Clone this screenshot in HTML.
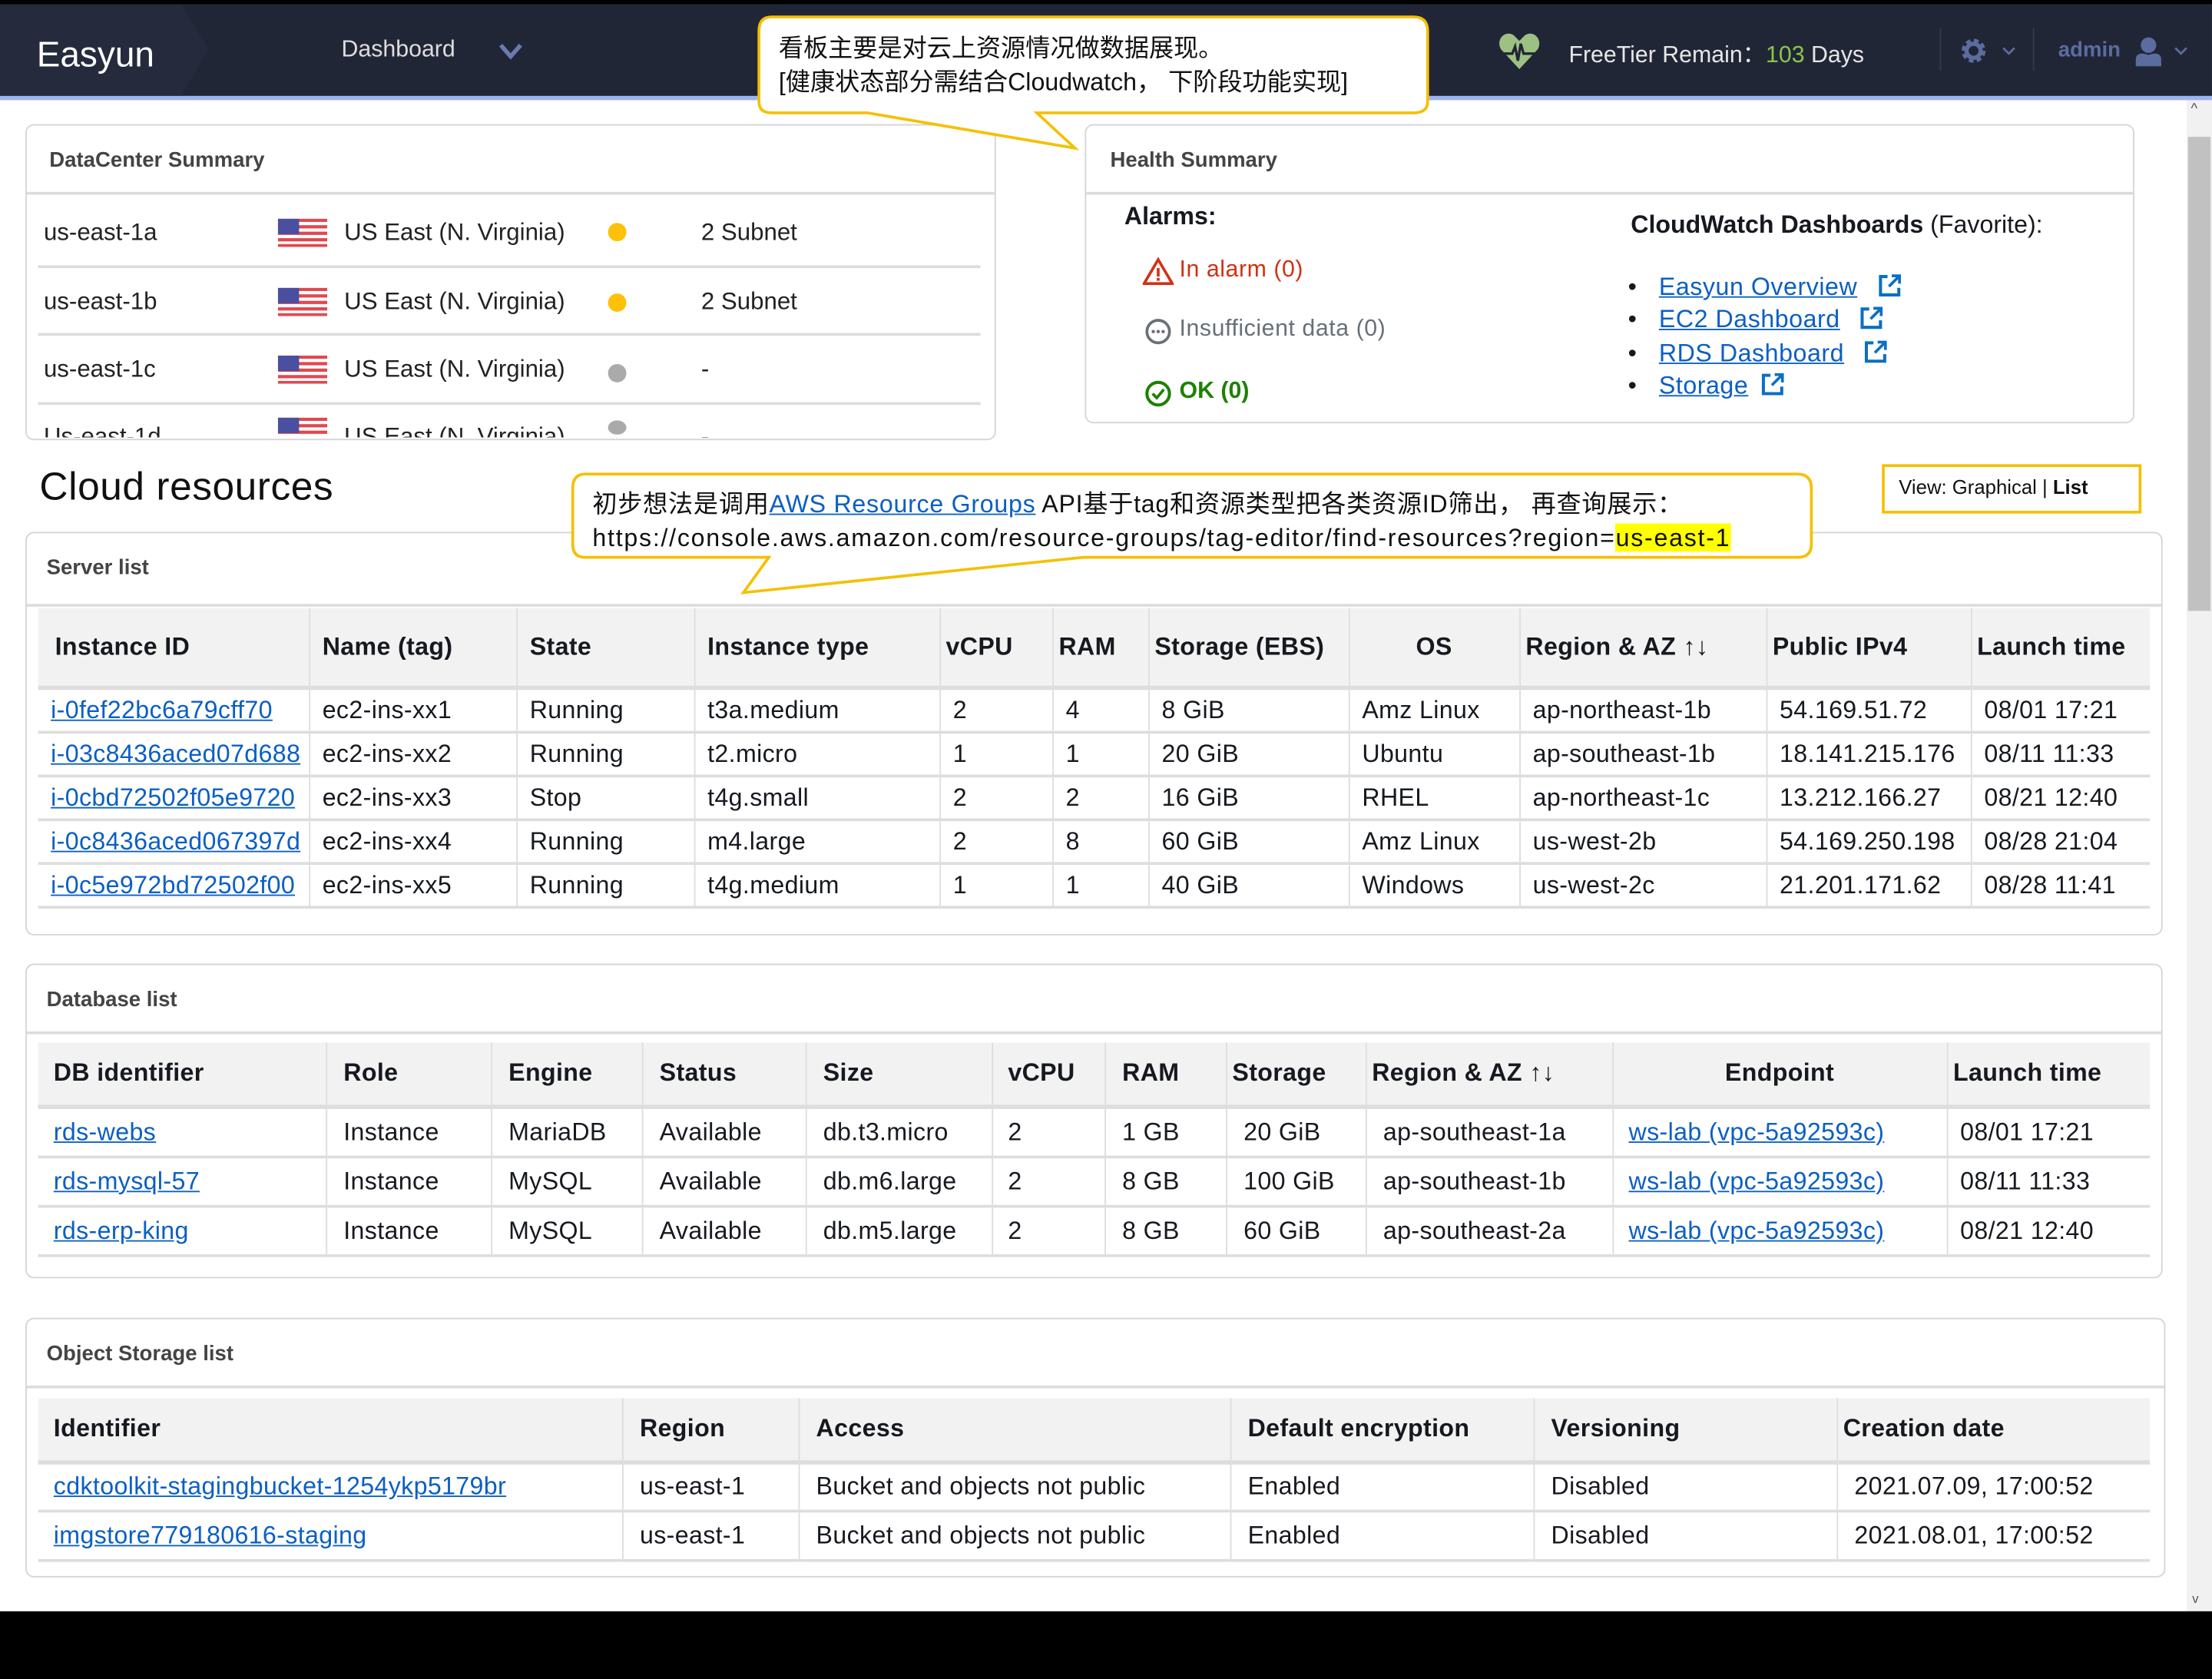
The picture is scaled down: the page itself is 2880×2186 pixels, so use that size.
<!DOCTYPE html>
<html><head><meta charset="utf-8">
<style>
html,body{margin:0;padding:0;width:2880px;height:2186px;overflow:hidden;background:#fff}
#w{position:absolute;left:0;top:0;width:1568px;height:1190px;transform:scale(1.83673,1.83697);transform-origin:0 0;font-family:"Liberation Sans","Noto Sans CJK SC",sans-serif;color:#16191f;overflow:hidden}
.a{position:absolute;white-space:nowrap}
.card{position:absolute;border:1.5px solid #d5d5d5;border-radius:6px;background:#fff}
.card .h{position:absolute;left:14px;top:14px;font-size:15px;font-weight:bold;color:#444}
.card .sep{position:absolute;left:0;right:0;height:2px;background:#dcdcdc}
table{position:absolute;border-collapse:collapse;table-layout:fixed;font-size:17.5px;letter-spacing:0.2px}
td,th{border-left:1px solid #ddd;padding:0 0 0 9px;white-space:nowrap;overflow:hidden;text-align:left}
td:first-child,th:first-child{border-left:none}
th{background:#f2f2f2;font-weight:bold;border-bottom:3px solid #ddd}
td{border-bottom:2px solid #ddd}
a{color:#0b5fc4;text-decoration:underline}
.dc{font-size:17px;color:#222}
.dot{position:absolute;width:13px;height:13px;border-radius:50%}
.hl{stroke:#f5c000;stroke-width:2;fill:#fff}
.ext{display:inline-block;vertical-align:-2px;margin-left:14px}
</style></head><body><div id="w">
<svg width="0" height="0" style="position:absolute"><defs>
<g id="fl"><rect width="35" height="20" fill="#fff"/><rect y="0" width="35" height="2.3" fill="#e0484e"/><rect y="4.6" width="35" height="2.3" fill="#e0484e"/><rect y="9.2" width="35" height="2.3" fill="#e0484e"/><rect y="13.8" width="35" height="2.3" fill="#e0484e"/><rect y="18" width="35" height="2" fill="#e0484e"/><rect width="15" height="11" fill="#4a4fa0"/></g>
<g id="ex"><path d="M7 2 H2 V15 H15 V10" fill="none" stroke="#0b6fc4" stroke-width="2.2"/><path d="M10 1.5 H15.5 V7" fill="none" stroke="#0b6fc4" stroke-width="2"/><path d="M15 2 L8 9" stroke="#0b6fc4" stroke-width="2"/></g>
</defs></svg>
<!-- header -->
<div class="a" style="left:0;top:0;width:1568px;height:3px;background:#000"></div>
<div class="a" style="left:0;top:3px;width:1568px;height:65px;background:#212637"></div>
<svg class="a" style="left:0;top:3px" width="150" height="65"><polygon points="0,0 128,0 148,32 128,65 0,65" fill="#252b3d"/></svg>
<div class="a" style="left:0;top:68px;width:1568px;height:3px;background:#9bb4ee"></div>
<div class="a" style="left:26px;top:25px;font-size:25px;color:#fff">Easyun</div>
<div class="a" style="left:242px;top:26px;font-size:16.5px;color:#ddd">Dashboard</div>
<svg class="a" style="left:353px;top:29px" width="18" height="14"><path d="M2 3 L9 11 L16 3" stroke="#6a7bb0" stroke-width="3" fill="none"/></svg>
<svg class="a" style="left:1062px;top:22px" width="30" height="28"><path d="M15 27 L2 13 C-2 6 5 -1 11 3 L15 7 L19 3 C25 -1 32 6 28 13 Z" fill="#9dc183"/><path d="M2 16 H10 L12 11 L14 21 L16 9 L18 16 H28" stroke="#212637" stroke-width="1.8" fill="none"/></svg>
<div class="a" style="left:1112px;top:25px;font-size:16.5px;color:#e6e6e6">FreeTier Remain：<span style="color:#8bc34a">103</span> Days</div>
<div class="a" style="left:1375px;top:20px;width:1px;height:30px;background:#333a4d"></div>
<div class="a" style="left:1441px;top:20px;width:1px;height:30px;background:#333a4d"></div>
<svg class="a" style="left:1389px;top:26px" width="20" height="20" viewBox="0 0 20 20"><circle cx="10" cy="10" r="6.5" fill="none" stroke="#5b6c9e" stroke-width="4" stroke-dasharray="3 2.1"/><circle cx="10" cy="10" r="5" fill="none" stroke="#5b6c9e" stroke-width="3"/></svg>
<svg class="a" style="left:1419px;top:32px" width="10" height="8"><path d="M1 2 L5 6 L9 2" stroke="#5b6c9e" stroke-width="1.5" fill="none"/></svg>
<div class="a" style="left:1459px;top:27px;font-size:15px;color:#5b6c9e;font-weight:bold">admin</div>
<svg class="a" style="left:1512px;top:25px" width="22" height="22"><circle cx="11" cy="7" r="5.5" fill="#5b6c9e"/><path d="M2 22 V17 C2 13 6 12 11 14 C16 12 20 13 20 17 V22 Z" fill="#5b6c9e"/></svg>
<svg class="a" style="left:1541px;top:32px" width="10" height="8"><path d="M1 2 L5 6 L9 2" stroke="#5b6c9e" stroke-width="1.5" fill="none"/></svg>
<!-- scrollbar -->
<div class="a" style="left:1550px;top:71px;width:18px;height:1071px;background:#f1f1f1"></div>
<div class="a" style="left:1551px;top:97px;width:16px;height:336px;background:#c1c1c1"></div>
<div class="a" style="left:1553px;top:72px;font-size:10px;color:#555">^</div>
<div class="a" style="left:1554px;top:1128px;font-size:9px;color:#555">v</div>
<div class="a" style="left:0;top:1142px;width:1568px;height:48px;background:#000"></div>

<!-- DataCenter -->
<div class="card" style="left:18px;top:88px;width:686px;height:222px;overflow:hidden">
<div class="h" style="left:16px;top:16px">DataCenter Summary</div>
<div class="sep" style="top:47px"></div>
<div class="sep" style="top:99px;left:8px;right:10px"></div>
<div class="sep" style="top:147px;left:8px;right:10px"></div>
<div class="sep" style="top:196px;left:8px;right:10px"></div>
</div>
<div class="a dc" style="left:31px;top:155px">us-east-1a</div>
<div class="a dc" style="left:31px;top:204px">us-east-1b</div>
<div class="a dc" style="left:31px;top:252px">us-east-1c</div>
<div class="a" style="left:0;top:296px;width:706px;height:14px;overflow:hidden"><div class="a dc" style="left:31px;top:4px">Us-east-1d</div><div class="a dc" style="left:244px;top:4px">US East (N. Virginia)</div><div class="a dc" style="left:497px;top:4px">-</div></div>
<div class="a dc" style="left:244px;top:155px">US East (N. Virginia)</div>
<div class="a dc" style="left:244px;top:204px">US East (N. Virginia)</div>
<div class="a dc" style="left:244px;top:252px">US East (N. Virginia)</div>
<div class="a dc" style="left:497px;top:155px">2 Subnet</div>
<div class="a dc" style="left:497px;top:204px">2 Subnet</div>
<div class="a dc" style="left:497px;top:252px">-</div>
<div class="dot" style="left:431px;top:158px;background:#ffc107"></div>
<div class="dot" style="left:431px;top:208px;background:#ffc107"></div>
<div class="dot" style="left:431px;top:258px;background:#aaa"></div>
<div class="dot" style="left:431px;top:298px;background:#aaa;height:10px"></div>
<svg class="a" style="left:197px;top:155px" width="35" height="20"><use href="#fl"/></svg>
<svg class="a" style="left:197px;top:204px" width="35" height="20"><use href="#fl"/></svg>
<svg class="a" style="left:197px;top:252px" width="35" height="20"><use href="#fl"/></svg>
<svg class="a" style="left:197px;top:296px" width="35" height="13"><use href="#fl"/></svg>

<!-- Health -->
<div class="card" style="left:769px;top:88px;width:742px;height:210px">
<div class="h" style="left:17px;top:16px">Health Summary</div>
<div class="sep" style="top:47px"></div>
</div>
<div class="a" style="left:797px;top:143px;font-size:17.5px;font-weight:bold">Alarms:</div>
<svg class="a" style="left:810px;top:182px" width="22" height="20"><path d="M11 2 L21 19 H1 Z" fill="none" stroke="#d13212" stroke-width="2"/><rect x="10" y="8" width="2" height="6" fill="#d13212"/><rect x="10" y="15" width="2" height="2" fill="#d13212"/></svg>
<div class="a" style="left:836px;top:182px;font-size:16.5px;color:#d13212;letter-spacing:0.3px">In alarm (0)</div>
<svg class="a" style="left:811px;top:225px" width="20" height="20"><circle cx="10" cy="10" r="8" fill="none" stroke="#687078" stroke-width="2"/><circle cx="6.5" cy="10" r="1.2" fill="#687078"/><circle cx="10" cy="10" r="1.2" fill="#687078"/><circle cx="13.5" cy="10" r="1.2" fill="#687078"/></svg>
<div class="a" style="left:836px;top:224px;font-size:16.5px;color:#687078;letter-spacing:0.3px">Insufficient data (0)</div>
<svg class="a" style="left:811px;top:269px" width="20" height="20"><circle cx="10" cy="10" r="8" fill="none" stroke="#1d8102" stroke-width="2.2"/><path d="M6 10 L9 13 L14 7" stroke="#1d8102" stroke-width="2" fill="none"/></svg>
<div class="a" style="left:836px;top:268px;font-size:16.5px;color:#1d8102;font-weight:bold">OK (0)</div>
<div class="a" style="left:1156px;top:149px;font-size:17.5px"><b>CloudWatch Dashboards</b> (Favorite):</div>
<div class="a" style="left:1154px;top:192px;font-size:17.5px;line-height:23.4px;letter-spacing:0.3px">
<div>•&nbsp;&nbsp; <a>Easyun Overview</a><svg class="ext" width="17" height="17"><use href="#ex"/></svg></div>
<div>•&nbsp;&nbsp; <a>EC2 Dashboard</a><svg class="ext" width="17" height="17"><use href="#ex"/></svg></div>
<div>•&nbsp;&nbsp; <a>RDS Dashboard</a><svg class="ext" width="17" height="17"><use href="#ex"/></svg></div>
<div>•&nbsp;&nbsp; <a>Storage</a><svg class="ext" width="17" height="17" style="margin-left:9px"><use href="#ex"/></svg></div>
</div>

<!-- callout 1 -->
<svg class="a" style="left:530px;top:8px" width="500" height="102"><path class="hl" d="M17 4 H472 Q482 4 482 14 V64 Q482 72 472 72 H205 L232 97 L85 72 H17 Q8 72 8 64 V14 Q8 4 17 4 Z"/></svg>
<div class="a" style="left:552px;top:22px;font-size:17.5px;line-height:24px;color:#111">看板主要是对云上资源情况做数据展现。<br>[健康状态部分需结合Cloudwatch，&nbsp;下阶段功能实现]</div>

<div class="a" style="left:28px;top:329px;font-size:28px;color:#111;letter-spacing:0.3px">Cloud resources</div>

<!-- Server list -->
<div class="card" style="left:18px;top:377px;width:1513px;height:284px">
<div class="h" style="top:16px">Server list</div>
<div class="sep" style="top:50px"></div>
</div>
<table style="left:27px;top:431px;width:1497px">
<colgroup><col style="width:192px"><col style="width:147px"><col style="width:126px"><col style="width:174px"><col style="width:80px"><col style="width:68px"><col style="width:142px"><col style="width:121px"><col style="width:175px"><col style="width:145px"><col style="width:127px"></colgroup>
<tr style="height:56px"><th style="padding-left:12px">Instance ID</th><th>Name (tag)</th><th>State</th><th>Instance type</th><th style="padding-left:4px">vCPU</th><th style="padding-left:4px">RAM</th><th style="padding-left:4px">Storage (EBS)</th><th style="text-align:center;padding:0">OS</th><th style="padding-left:4px">Region &amp; AZ ↑↓</th><th style="padding-left:4px">Public IPv4</th><th style="padding-left:4px">Launch time</th></tr>
<tr style="height:32px"><td><a>i-0fef22bc6a79cff70</a></td><td>ec2-ins-xx1</td><td>Running</td><td>t3a.medium</td><td>2</td><td>4</td><td>8 GiB</td><td>Amz Linux</td><td>ap-northeast-1b</td><td>54.169.51.72</td><td>08/01 17:21</td></tr>
<tr style="height:31px"><td><a>i-03c8436aced07d688</a></td><td>ec2-ins-xx2</td><td>Running</td><td>t2.micro</td><td>1</td><td>1</td><td>20 GiB</td><td>Ubuntu</td><td>ap-southeast-1b</td><td>18.141.215.176</td><td>08/11 11:33</td></tr>
<tr style="height:31px"><td><a>i-0cbd72502f05e9720</a></td><td>ec2-ins-xx3</td><td>Stop</td><td>t4g.small</td><td>2</td><td>2</td><td>16 GiB</td><td>RHEL</td><td>ap-northeast-1c</td><td>13.212.166.27</td><td>08/21 12:40</td></tr>
<tr style="height:31px"><td><a>i-0c8436aced067397d</a></td><td>ec2-ins-xx4</td><td>Running</td><td>m4.large</td><td>2</td><td>8</td><td>60 GiB</td><td>Amz Linux</td><td>us-west-2b</td><td>54.169.250.198</td><td>08/28 21:04</td></tr>
<tr style="height:31px"><td><a>i-0c5e972bd72502f00</a></td><td>ec2-ins-xx5</td><td>Running</td><td>t4g.medium</td><td>1</td><td>1</td><td>40 GiB</td><td>Windows</td><td>us-west-2c</td><td>21.201.171.62</td><td>08/28 11:41</td></tr>
</table>

<!-- callout 2 -->
<svg class="a" style="left:398px;top:330px" width="895" height="95"><path class="hl" d="M17 6 H876 Q886 6 886 16 V56 Q886 65 876 65 H370 L129 90 L147 65 H17 Q8 65 8 56 V16 Q8 6 17 6 Z"/></svg>
<div class="a" style="left:420px;top:345px;font-size:17.5px;line-height:24px;color:#111"><span style="letter-spacing:0.4px">初步想法是调用<a>AWS Resource Groups</a> API基于tag和资源类型把各类资源ID筛出，&nbsp;再查询展示：</span><br><span style="letter-spacing:0.95px">https://console.aws.amazon.com/resource-groups/tag-editor/find-resources?region=<span style="background:#ffff00">us-east-1</span></span></div>
<div class="a" style="left:1334px;top:329px;width:180px;height:31px;border:2px solid #f5c000;background:#fff"></div>
<div class="a" style="left:1346px;top:337px;font-size:14px;color:#111">View: Graphical | <b>List</b></div>

<!-- Database -->
<div class="card" style="left:18px;top:683px;width:1513px;height:221px">
<div class="h" style="top:16px">Database list</div>
<div class="sep" style="top:47px"></div>
</div>
<table style="left:27px;top:739px;width:1497px">
<colgroup><col style="width:204px"><col style="width:117px"><col style="width:107px"><col style="width:116px"><col style="width:132px"><col style="width:80px"><col style="width:86px"><col style="width:99px"><col style="width:175px"><col style="width:237px"><col style="width:144px"></colgroup>
<tr style="height:45px"><th style="padding-left:11px">DB identifier</th><th style="padding-left:12px">Role</th><th style="padding-left:12px">Engine</th><th style="padding-left:12px">Status</th><th style="padding-left:12px">Size</th><th style="padding-left:11px">vCPU</th><th style="padding-left:12px">RAM</th><th style="padding-left:4px">Storage</th><th style="padding-left:4px">Region &amp; AZ ↑↓</th><th style="text-align:center;padding:0">Endpoint</th><th style="padding-left:4px">Launch time</th></tr>
<tr style="height:36px"><td style="padding-left:11px"><a>rds-webs</a></td><td style="padding-left:12px">Instance</td><td style="padding-left:12px">MariaDB</td><td style="padding-left:12px">Available</td><td style="padding-left:12px">db.t3.micro</td><td style="padding-left:11px">2</td><td style="padding-left:12px">1 GB</td><td style="padding-left:12px">20 GiB</td><td style="padding-left:12px">ap-southeast-1a</td><td style="padding-left:11px"><a>ws-lab (vpc-5a92593c)</a></td><td>08/01 17:21</td></tr>
<tr style="height:35px"><td style="padding-left:11px"><a>rds-mysql-57</a></td><td style="padding-left:12px">Instance</td><td style="padding-left:12px">MySQL</td><td style="padding-left:12px">Available</td><td style="padding-left:12px">db.m6.large</td><td style="padding-left:11px">2</td><td style="padding-left:12px">8 GB</td><td style="padding-left:12px">100 GiB</td><td style="padding-left:12px">ap-southeast-1b</td><td style="padding-left:11px"><a>ws-lab (vpc-5a92593c)</a></td><td>08/11 11:33</td></tr>
<tr style="height:35px"><td style="padding-left:11px"><a>rds-erp-king</a></td><td style="padding-left:12px">Instance</td><td style="padding-left:12px">MySQL</td><td style="padding-left:12px">Available</td><td style="padding-left:12px">db.m5.large</td><td style="padding-left:11px">2</td><td style="padding-left:12px">8 GB</td><td style="padding-left:12px">60 GiB</td><td style="padding-left:12px">ap-southeast-2a</td><td style="padding-left:11px"><a>ws-lab (vpc-5a92593c)</a></td><td>08/21 12:40</td></tr>
</table>

<!-- Object storage -->
<div class="card" style="left:18px;top:934px;width:1515px;height:182px">
<div class="h" style="top:16px">Object Storage list</div>
<div class="sep" style="top:47px"></div>
</div>
<table style="left:27px;top:991px;width:1497px">
<colgroup><col style="width:414px"><col style="width:125px"><col style="width:306px"><col style="width:215px"><col style="width:215px"><col style="width:222px"></colgroup>
<tr style="height:45px"><th style="padding-left:11px">Identifier</th><th style="padding-left:12px">Region</th><th style="padding-left:12px">Access</th><th style="padding-left:12px">Default encryption</th><th style="padding-left:12px">Versioning</th><th style="padding-left:4px">Creation date</th></tr>
<tr style="height:35px"><td style="padding-left:11px"><a>cdktoolkit-stagingbucket-1254ykp5179br</a></td><td style="padding-left:12px">us-east-1</td><td style="padding-left:12px">Bucket and objects not public</td><td style="padding-left:12px">Enabled</td><td style="padding-left:12px">Disabled</td><td style="padding-left:12px">2021.07.09, 17:00:52</td></tr>
<tr style="height:35px"><td style="padding-left:11px"><a>imgstore779180616-staging</a></td><td style="padding-left:12px">us-east-1</td><td style="padding-left:12px">Bucket and objects not public</td><td style="padding-left:12px">Enabled</td><td style="padding-left:12px">Disabled</td><td style="padding-left:12px">2021.08.01, 17:00:52</td></tr>
</table>
</div></body></html>
